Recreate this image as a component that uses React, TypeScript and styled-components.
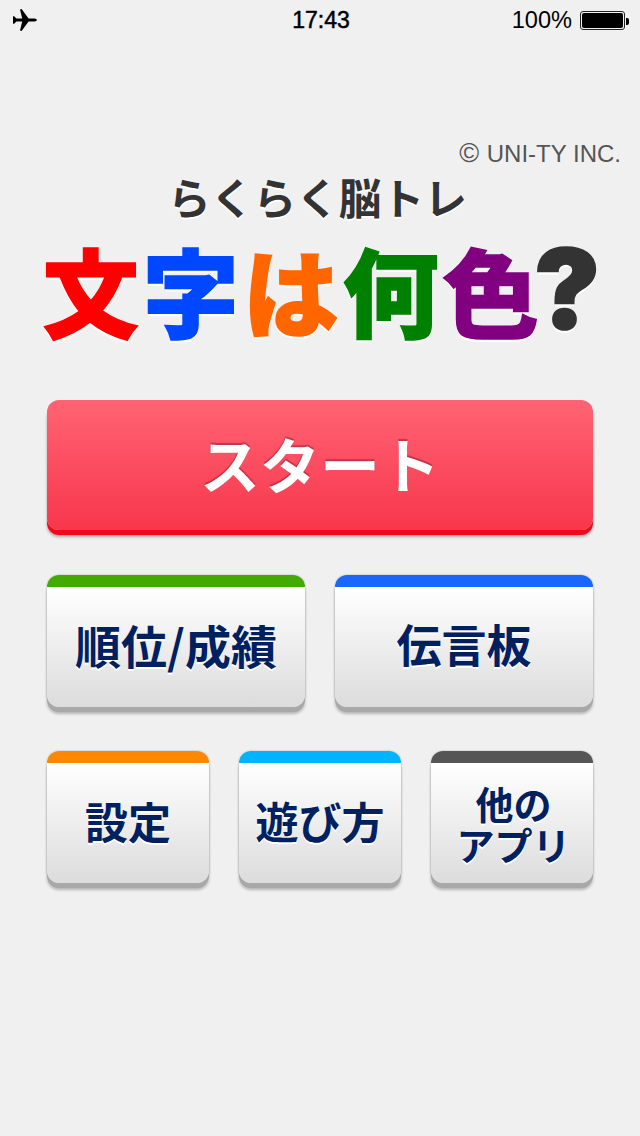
import React from "react";
import styled, { createGlobalStyle } from "styled-components";

const Global = createGlobalStyle`
  html, body { margin: 0; padding: 0; background: #f0f0f0; }
  #root { width: 640px; height: 1136px; overflow: hidden; }
`;
const SANS = `"Liberation Sans", "Noto Sans CJK JP", sans-serif`;
const CJK = `"Noto Sans CJK JP", "Liberation Sans", sans-serif`;

const Page = styled.div`
  width: 640px; height: 1136px; background: #f0f0f0;
  display: flex; flex-direction: column; font-family: ${CJK};
`;
const StatusBar = styled.div`
  height: 40px; display: grid; grid-template-columns: 1fr auto 1fr; align-items: center;
  padding: 0 11px 0 13px; box-sizing: border-box; color: #000; font-family: ${SANS}; font-size: 23px;
`;
const StatusLeft = styled.div`display: flex; align-items: center;`;
const Time = styled.div`font-weight: 400; -webkit-text-stroke: 0.5px #000;`;
const StatusRight = styled.div`
  display: flex; justify-content: flex-end; align-items: center; gap: 8px; font-size: 23.6px;
`;
const Battery = styled.div`
  position: relative; width: 41px; height: 15px; border: 1px solid #222; border-radius: 3px;
  padding: 1px; margin-right: 4px;
  &::before { content: ""; display: block; width: 100%; height: 100%; background: #000; border-radius: 2px; }
  &::after { content: ""; position: absolute; right: -5px; top: 6px; width: 3px; height: 7px; background: #000; border-radius: 0 2px 2px 0; }
`;
const Copyright = styled.div`
  margin-top: 100px; padding-right: 19px; text-align: right; font-family: ${SANS};
  font-size: 24px; line-height: 28px; color: #555;
`;
const CopyrightMark = styled.span`font-size: 27px; line-height: 0; margin-right: 1px;`;
const Subtitle = styled.div`
  text-align: center; font-size: 42.7px; line-height: 56px; font-weight: 700; color: #333;
  text-shadow: 0 2px 0 #fff; padding-right: 5px;
`;
const Title = styled.div`
  margin-top: 7px; display: flex; justify-content: center; height: 116px; align-items: center;
  font-size: 96px; line-height: 116px; font-weight: 900; letter-spacing: 4px; text-shadow: 0 3px 0 #fff;
  -webkit-text-stroke: 1.5px currentColor; padding-left: 7px; box-sizing: border-box;
`;
const Glyph = styled.span<{ $c: string }>`color: ${p => p.$c};`;
const Question = styled.span`
  color: #333; font-family: "Inter", "Liberation Sans", sans-serif; font-weight: 900; font-size: 111px; margin-left: -9px;
`;
const Menu = styled.div`
  margin-top: 53px; padding: 0 47px; display: flex; flex-direction: column;
`;
const StartButton = styled.div`
  height: 130px; border-radius: 12px; margin-bottom: 45px;
  background: linear-gradient(#ff6474, #f8364c);
  box-shadow: 0 5px 0 #ee0a1a, 0 7px 3px rgba(0,0,0,.3);
  display: flex; align-items: center; justify-content: center;
  font-size: 60px; font-weight: 700; color: #fff; text-shadow: 0 -2px 1px rgba(120,20,40,.45);
  padding-bottom: 6px; box-sizing: border-box;
`;
const Row = styled.div<{ $cols: number; $mb: number }>`
  display: grid; grid-template-columns: repeat(${p => p.$cols}, 1fr); gap: 30px; margin-bottom: ${p => p.$mb}px;
`;
const Tile = styled.div<{ $accent: string; $size: number; $lh?: number; $pb?: number; $pl?: number }>`
  height: 132px; box-sizing: border-box; border-radius: 12px; border-top: 12px solid ${p => p.$accent};
  background: linear-gradient(#fff, #dcdcdc);
  box-shadow: 0 5px 0 #a8a8a8, 0 0 2px rgba(0,0,0,.3), 0 7px 3px rgba(0,0,0,.25);
  display: flex; align-items: center; justify-content: center; text-align: center;
  color: #002060; font-weight: 700; font-size: ${p => p.$size}px; line-height: ${p => p.$lh ?? 44}px;
  padding-bottom: ${p => p.$pb ?? 6}px; padding-left: ${p => p.$pl ?? 0}px;
  text-shadow: 0 2px 0 #fff;
`;

const Plane = () => (
  <svg width="24" height="22" viewBox="0 0 24 22">
    <path fill="#000" d="M0 7.2 L1.2 7.2 L3.4 9.6 L9.2 9.6 L7 .4 L8.6 0 L15.6 9.4 L22 9.4 Q24 10 24 11 Q24 12 22 12.4 L15.6 12.4 L8.6 22 L7 21.6 L9.2 12.4 L3.4 12.4 L1.2 14.8 L0 14.8 Z" />
  </svg>
);

export default function App() {
  return (
    <Page>
      <Global />
      <StatusBar>
        <StatusLeft><Plane /></StatusLeft>
        <Time>17:43</Time>
        <StatusRight>100%<Battery /></StatusRight>
      </StatusBar>
      <Copyright><CopyrightMark>©</CopyrightMark> UNI-TY INC.</Copyright>
      <Subtitle>らくらく脳トレ</Subtitle>
      <Title>
        <Glyph $c="#ff0000">文</Glyph>
        <Glyph $c="#0048ff">字</Glyph>
        <Glyph $c="#ff6600">は</Glyph>
        <Glyph $c="#008000">何</Glyph>
        <Glyph $c="#800080">色</Glyph>
        <Question>?</Question>
      </Title>
      <Menu>
        <StartButton>スタート</StartButton>
        <Row $cols={2} $mb={44}>
          <Tile $accent="#44aa00" $size={46}>順位/成績</Tile>
          <Tile $accent="#1a66ff" $size={45}>伝言板</Tile>
        </Row>
        <Row $cols={3} $mb={0}>
          <Tile $accent="#ff8800" $size={43}>設定</Tile>
          <Tile $accent="#00b4ff" $size={43}>遊び方</Tile>
          <Tile $accent="#555555" $size={38} $lh={41} $pb={0} $pl={3}>他の<br />アプリ</Tile>
        </Row>
      </Menu>
    </Page>
  );
}
